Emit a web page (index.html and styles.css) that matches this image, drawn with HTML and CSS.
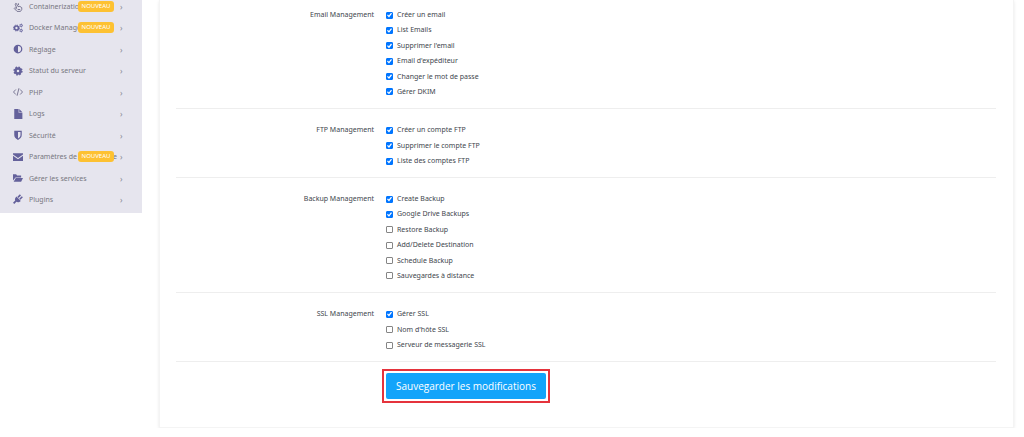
FILE: index.html
```html
<!DOCTYPE html>
<html lang="fr">
<head>
<meta charset="utf-8">
<meta name="viewport" content="width=device-width, initial-scale=1">
<title>Modifier les permissions</title>
<link rel="stylesheet" href="styles.css">
</head>
<body>
<div class="layout">
  <nav class="sidebar">
    <ul class="menu">
      <li><a class="menu-link" href="#"><svg class="icon thin" viewBox="0 0 16 16"><path d="M6 10L3.500 3.500Q4 1.500 5.500 2.500L8 7.500l3-.5 3 2v3l-2 3H6.500L2 10.500l1-1.500 3 2M9 5L8.500 2M7.500 12h4"/></svg><span class="name">Containerization</span><span class="badge">NOUVEAU</span><span class="arrow">›</span></a></li>
      <li><a class="menu-link" href="#"><svg class="icon" viewBox="0 0 16 16"><circle class="ring" cx="5.500" cy="8" r="3.200"/><circle class="teeth" cx="5.500" cy="8" r="4.700"/><circle class="ring small" cx="13" cy="4" r="1.700"/><circle class="teeth small" cx="13" cy="4" r="2.600"/><circle class="ring small" cx="13" cy="12" r="1.700"/><circle class="teeth small" cx="13" cy="12" r="2.600"/></svg><span class="name">Docker Manager</span><span class="badge">NOUVEAU</span><span class="arrow">›</span></a></li>
      <li><a class="menu-link" href="#"><svg class="icon" viewBox="0 0 16 16"><path fill-rule="evenodd" d="M8 1a7 7 0 1 0 0 14A7 7 0 0 0 8 1zm0 2a5 5 0 0 1 0 10z"/></svg><span class="name">Réglage</span><span class="arrow">›</span></a></li>
      <li><a class="menu-link" href="#"><svg class="icon" viewBox="0 0 16 16"><circle class="ring big" cx="8" cy="8" r="4"/><circle class="teeth big" cx="8" cy="8" r="6.200"/></svg><span class="name">Statut du serveur</span><span class="arrow">›</span></a></li>
      <li><a class="menu-link" href="#"><svg class="icon thin" viewBox="0 0 16 16"><path d="M4.500 4L.8 8l3.700 4M11.500 4l3.700 4-3.700 4M9.500 2l-3 12"/></svg><span class="name">PHP</span><span class="arrow">›</span></a></li>
      <li><a class="menu-link" href="#"><svg class="icon" viewBox="0 0 16 16"><path d="M2 0h7v6h6v10H2zM10 0l5 5h-5z"/></svg><span class="name">Logs</span><span class="arrow">›</span></a></li>
      <li><a class="menu-link" href="#"><svg class="icon" viewBox="0 0 16 16"><path fill-rule="evenodd" d="M2 1h12v7c0 4-3 6-6 8-3-2-6-4-6-8zM8 3v10.500c2.500-1.500 4-3 4-5.500V3z"/></svg><span class="name">Sécurité</span><span class="arrow">›</span></a></li>
      <li><a class="menu-link" href="#"><svg class="icon" viewBox="0 0 16 16"><path d="M0 2h16v2L8 9.500 0 4zM0 6l8 5.500L16 6v8.500H0z"/></svg><span class="name">Paramètres de messagerie</span><span class="badge">NOUVEAU</span><span class="arrow">›</span></a></li>
      <li><a class="menu-link" href="#"><svg class="icon" viewBox="0 0 16 16"><path d="M0 2h5l1.500 2H13v3H4L0 12zM4.500 8H16l-3 6H1z"/></svg><span class="name">Gérer les services</span><span class="arrow">›</span></a></li>
      <li><a class="menu-link" href="#"><svg class="icon" viewBox="0 0 16 16"><path d="M5.500 4l7 7c-2 2-5 2.800-7 1.500L2 16 0 14l3.500-3.500C2.500 8.500 3.500 6 5.500 4zM7 4.500L11 .5 12.800 2.300 8.800 6.300zM10 7.500L14 3.500l1.800 1.800-4 4z"/></svg><span class="name">Plugins</span><span class="arrow">›</span></a></li>
    </ul>
  </nav>
  <main class="card">
    <form>
      <div class="group" role="group" aria-labelledby="g-email">
        <span class="group-title" id="g-email">Email Management</span>
        <div class="checks long">
          <label class="check"><input type="checkbox" checked>Créer un email</label>
          <label class="check"><input type="checkbox" checked>List Emails</label>
          <label class="check"><input type="checkbox" checked>Supprimer l'email</label>
          <label class="check"><input type="checkbox" checked>Email d'expéditeur</label>
          <label class="check"><input type="checkbox" checked>Changer le mot de passe</label>
          <label class="check"><input type="checkbox" checked>Gérer DKIM</label>
        </div>
      </div>
      <div class="group" role="group" aria-labelledby="g-ftp">
        <span class="group-title" id="g-ftp">FTP Management</span>
        <div class="checks">
          <label class="check"><input type="checkbox" checked>Créer un compte FTP</label>
          <label class="check"><input type="checkbox" checked>Supprimer le compte FTP</label>
          <label class="check"><input type="checkbox" checked>Liste des comptes FTP</label>
        </div>
      </div>
      <div class="group" role="group" aria-labelledby="g-backup">
        <span class="group-title" id="g-backup">Backup Management</span>
        <div class="checks long">
          <label class="check"><input type="checkbox" checked>Create Backup</label>
          <label class="check"><input type="checkbox" checked>Google Drive Backups</label>
          <label class="check"><input type="checkbox">Restore Backup</label>
          <label class="check"><input type="checkbox">Add/Delete Destination</label>
          <label class="check"><input type="checkbox">Schedule Backup</label>
          <label class="check"><input type="checkbox">Sauvegardes à distance</label>
        </div>
      </div>
      <div class="group" role="group" aria-labelledby="g-ssl">
        <span class="group-title" id="g-ssl">SSL Management</span>
        <div class="checks">
          <label class="check"><input type="checkbox" checked>Gérer SSL</label>
          <label class="check"><input type="checkbox">Nom d'hôte SSL</label>
          <label class="check"><input type="checkbox">Serveur de messagerie SSL</label>
        </div>
      </div>
      <div class="actions">
        <div class="highlight"><button class="save" type="submit">Sauvegarder les modifications</button></div>
      </div>
    </form>
  </main>
</div>
</body>
</html>
```
FILE: styles.css
```css
* { box-sizing: border-box; }
body {
  margin: 0;
  background: #fff;
  color: #41464d;
  font: 7px/15px "Noto Sans", "Open Sans", sans-serif;
}
.layout {
  display: grid;
  grid-template-columns: 142px minmax(0, 1fr);
  column-gap: 17px;
  align-items: start;
  padding-right: 10px;
}
.sidebar {
  padding-bottom: 3px;
  background: #e6e5ee;
  overflow: hidden;
}
.menu {
  display: flex;
  flex-direction: column;
  justify-content: space-between;
  min-height: 214px;
  margin: -4px 0 0;
  padding: 0;
  list-style: none;
}
.menu-link {
  position: relative;
  display: flex;
  align-items: center;
  gap: 6px;
  height: 21px;
  padding: 0 17px 0 13px;
  color: #77777f;
  text-decoration: none;
  white-space: nowrap;
}
.icon {
  flex: none;
  width: 10px;
  height: 10px;
  fill: #64619b;
  stroke: none;
}
.icon.thin { fill: none; stroke: #74718f; stroke-width: 1.5; }
.ring { fill: none; stroke: #64619b; stroke-width: 2.6; }
.teeth { fill: none; stroke: #64619b; stroke-width: 1.6; stroke-dasharray: 1.9 1.8; }
.ring.small { stroke-width: 1.4; }
.teeth.small { stroke-width: 1; stroke-dasharray: 1.2 1.5; }
.ring.big { stroke-width: 4; }
.teeth.big { stroke-width: 2.4; stroke-dasharray: 2.6 2.27; }
.name { flex: 1; min-width: 0; }
.arrow { flex: none; width: 5px; font-size: 8px; color: #858590; }
.badge {
  position: absolute;
  left: 78px;
  top: 5px;
  width: 36px;
  border-radius: 3px;
  background: #fdc132;
  color: #fff;
  font-size: 6px;
  line-height: 11px;
  text-align: center;
}
.card {
  padding: 0 17px 24px 16px;
  border: 1px solid #f4f4f4;
  border-top: 0;
  box-shadow: 0 1px 3px #e8e8e8;
}
.group {
  display: grid;
  grid-template-columns: 198px minmax(0, 1fr);
  column-gap: 12px;
  padding: 13px 0 9px;
  border-bottom: 1px solid #eee;
}
.group:first-child { padding-top: 7px; }
.group-title { text-align: right; }
.checks {
  display: flex;
  flex-direction: column;
  justify-content: space-between;
  align-items: flex-start;
  min-height: 46px;
}
.checks.long { min-height: 92px; }
.check { display: flex; align-items: center; gap: 4px; }
.check input {
  display: grid;
  place-items: center;
  appearance: none;
  width: 7px;
  height: 7px;
  margin: 1px 0 0;
  border: 1px solid #858585;
  border-radius: 1px;
  background: #fff;
}
.check input:checked { border-color: #0075ff; background: #0075ff; }
.check input:checked::after {
  content: "";
  width: 5px;
  height: 5px;
  background: #fff;
  clip-path: polygon(0 55%, 18% 38%, 38% 60%, 80% 5%, 100% 22%, 40% 98%);
}
.actions { display: flex; padding: 7px 0 0 206px; }
.highlight { padding: 2px; border: 2px solid #e5333c; }
.save {
  display: block;
  padding: 0 10px;
  border: 0;
  border-radius: 2px;
  background: #13a4fa;
  color: #fff;
  font: 10px/26px "Open Sans", "Noto Sans", sans-serif;
}
```
